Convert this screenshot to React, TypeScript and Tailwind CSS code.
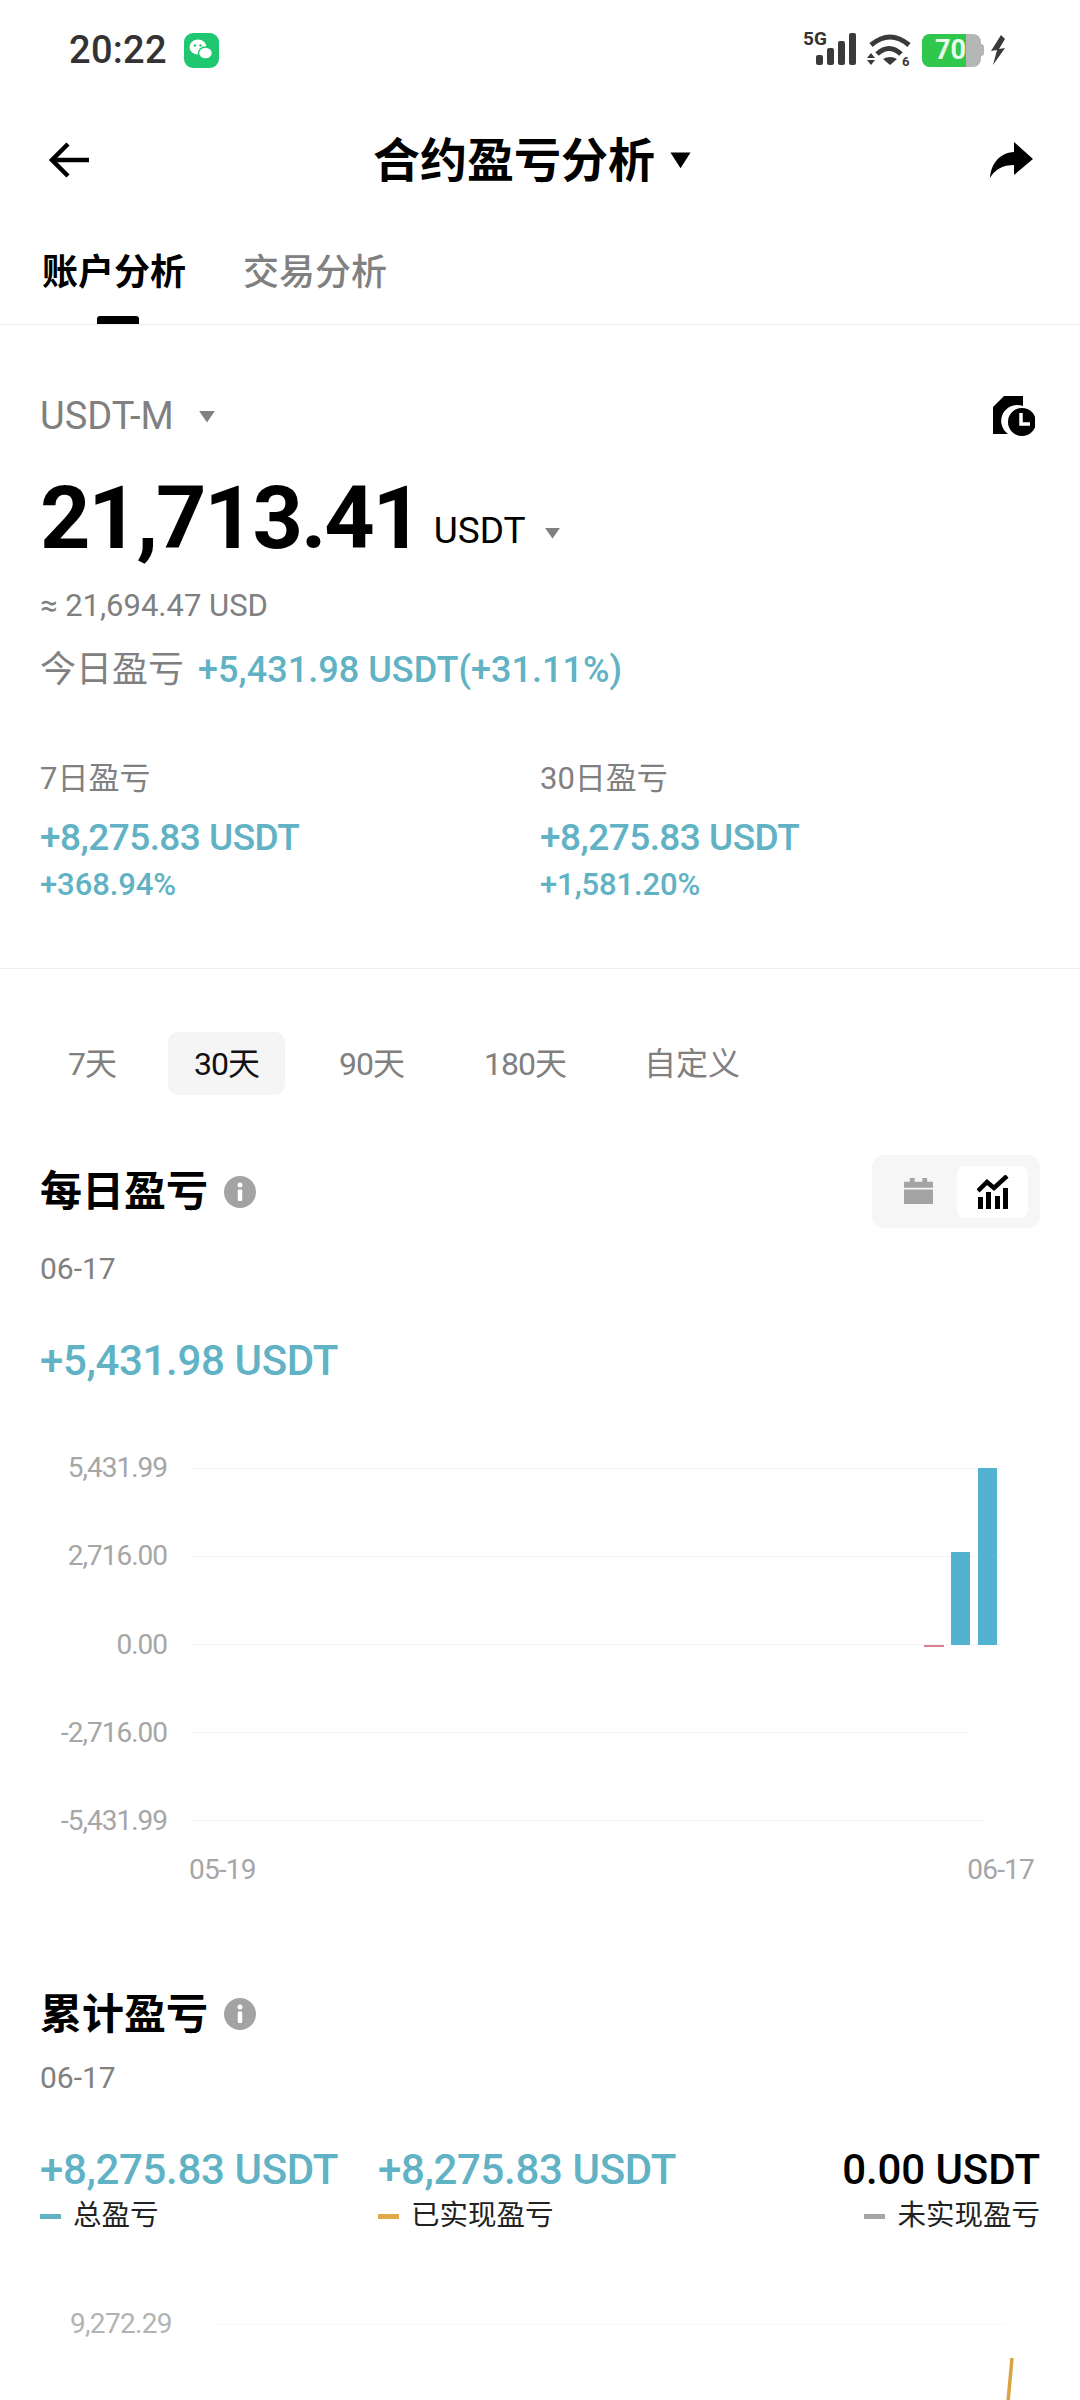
import React from "react"

const Caret = ({ className }: { className: string }) => (
  <svg viewBox="0 0 16 12" preserveAspectRatio="none" className={className}>
    <path d="M1 1h14L8 11.5z" fill="currentColor" />
  </svg>
)

const InfoIcon = () => (
  <svg viewBox="0 0 32 32" className="w-8 h-8 ml-4">
    <circle cx="16" cy="16" r="16" fill="#a3a3a3" />
    <rect x="13.8" y="13.5" width="4.4" height="11.5" rx="1" fill="#fff" />
    <circle cx="16" cy="9" r="2.5" fill="#fff" />
  </svg>
)

const StatusIcons = () => (
  <svg viewBox="0 -4 108 48" className="w-[108px] h-12">
    <text x="0" y="15" fontSize="19" fontWeight="700" fill="#333" fontFamily="Roboto">5G</text>
    <rect x="13" y="25" width="7" height="10" rx="2" fill="#3a3a3a" />
    <rect x="24" y="18" width="7" height="17" rx="2" fill="#3a3a3a" />
    <rect x="35" y="11" width="7" height="24" rx="2" fill="#3a3a3a" />
    <rect x="46" y="3" width="7" height="32" rx="2" fill="#3a3a3a" />
    <path d="M68 15 Q87 -1 106 15" fill="none" stroke="#3a3a3a" strokeWidth="5" />
    <path d="M74 24 Q86 13 98 24" fill="none" stroke="#3a3a3a" strokeWidth="5" />
    <path d="M80 29 Q87 25 94 29 L87 35z" fill="#3a3a3a" />
    <path d="M64 28h8l-4-5zM64 30h8l-4 5z" fill="#3a3a3a" />
    <text x="99" y="36" fontSize="13" fontWeight="700" fill="#3a3a3a" fontFamily="Roboto">6</text>
  </svg>
)

const Battery = () => (
  <div className="relative flex items-center ml-[11px]">
    <div className="relative w-[59px] h-[33px] rounded-[8px] overflow-hidden bg-[#b4b6b4] flex items-center">
      <div className="w-[44px] h-full bg-[#2fc84c]" />
      <span className="absolute left-[13px] text-[27px] leading-none font-bold text-[#eafbe9]">70</span>
    </div>
    <div className="w-[3px] h-[12px] rounded-r-sm bg-[#b4b6b4]" />
  </div>
)

const RANGES = [
  { label: "7天", cls: "ml-[28px] tracking-[-1px] flex items-center" },
  { label: "30天", cls: "ml-[52px] w-[117px] h-[63px] rounded-[10px] bg-[#f5f5f5] text-[#111] tracking-[-1px] flex items-center justify-center" },
  { label: "90天", cls: "ml-[54px] tracking-[-1px] flex items-center" },
  { label: "180天", cls: "ml-[80px] tracking-[-1px] flex items-center" },
  { label: "自定义", cls: "ml-[78px] flex items-center" },
]

function Legend({ color, label }: { color: string; label: string }) {
  return (
    <div className="flex items-center h-10 gap-[12px] text-[28.5px] text-[#222]">
      <span className={"w-[21px] h-[5px] " + color} />
      <span>{label}</span>
    </div>
  )
}

export default function App() {
  return (
    <div className="relative w-[1080px] h-[2400px] overflow-hidden bg-white font-['Roboto','Noto_Sans_CJK_SC',sans-serif]">
      {/* status bar */}
      <div className="h-[100px] flex items-center pl-[69px] pr-[75px]">
        <span className="text-[38px] font-medium text-[#333] tracking-[0.3px]">20:22</span>
        <div className="ml-[17px] w-[35px] h-[35px] rounded-[9px] bg-[#1fc771] flex items-center justify-center">
          <svg viewBox="0 0 28 28" className="w-[28px] h-[28px]">
            <ellipse cx="11" cy="11" rx="8.500" ry="7.500" fill="#fff" />
            <ellipse cx="18.500" cy="17" rx="7" ry="6" fill="#fff" stroke="#1fc771" strokeWidth="1.500" />
            <circle cx="8" cy="9.500" r="1.200" fill="#1fc771" />
            <circle cx="13.500" cy="9.500" r="1.200" fill="#1fc771" />
          </svg>
        </div>
        <div className="ml-auto flex items-center">
          <StatusIcons />
          <Battery />
          <svg viewBox="0 0 14 30" className="w-[14px] h-[30px] ml-[7px]">
            <path d="M10 0 0 16l6-1-4 15L14 13l-6 1 6-10z" fill="#3a3a3a" />
          </svg>
        </div>
      </div>

      {/* header */}
      <div className="h-[120px] flex items-center justify-between pl-[48px] pr-[47px]">
        <svg viewBox="0 0 42 36" className="w-[42px] h-9">
          <path d="M41 18H4M20 2 4 18l16 16" fill="none" stroke="#000" strokeWidth="4.500" />
        </svg>
        <div className="flex items-center mr-[14px] text-black">
          <span className="text-[47px] font-semibold leading-none">合约盈亏分析</span>
          <Caret className="w-[23px] h-[18px] ml-[14px]" />
        </div>
        <svg viewBox="0 0 44 36" className="w-[44px] h-9">
          <path d="M25 0 44 17 25 33V23C14 23 6 27 1 36 2 22 10 11 25 10z" fill="#000" />
        </svg>
      </div>

      {/* tabs */}
      <div className="relative h-[105px] pt-[2px] flex items-center gap-[57px] pl-[42px] border-b border-[#efefef] text-[36px]">
        <span className="font-bold text-black">账户分析</span>
        <span className="font-medium text-[#808080]">交易分析</span>
        <span className="absolute left-[97px] bottom-0 w-[42px] h-[8px] rounded-t-[3px] bg-black" />
      </div>

      {/* balance */}
      <div className="px-[40px]">
        <div className="mt-[66px] h-[50px] flex items-center justify-between">
          <div className="flex items-center text-[#808080]">
            <span className="text-[38px]">USDT-M</span>
            <Caret className="w-[18px] h-[13px] ml-[24px]" />
          </div>
          <svg viewBox="0 0 42 40" className="w-[42px] h-10 mr-[5px]">
            <path d="M11 0H30V10A16 16 0 0 0 15 38H0V11z" fill="#000" />
            <circle cx="29" cy="26" r="14" fill="#000" />
            <path d="M28 17V28H37" fill="none" stroke="#fff" strokeWidth="3.500" />
          </svg>
        </div>
        <div className="mt-[32px] h-[90px] flex items-end">
          <span className="text-[88px] font-bold leading-[90px] text-black tracking-[-2.2px]">21,713.41</span>
          <span className="ml-[13px] mb-[10px] text-[37px] leading-[44px] text-black">USDT</span>
          <Caret className="w-[17px] h-[12px] ml-[18px] mb-[24px] text-[#808080]" />
        </div>
        <div className="mt-[23px] h-10 flex items-center text-[31px] text-[#808080]">≈ 21,694.47 USD</div>
        <div className="mt-[19px] h-[50px] flex items-center text-[36px]">
          <span className="text-[#808080]">今日盈亏</span>
          <span className="ml-[14px] font-medium text-[#60b2c4] tracking-[0.05px]">+5,431.98 USDT(+31.11%)</span>
        </div>
        <div className="mt-[64px] grid grid-cols-[500px_1fr]">
          {["+368.94%", "+1,581.20%"].map((pct, i) => (
            <div key={pct}>
              <div className="h-10 flex items-center text-[31px] text-[#808080]">{i === 0 ? "7日盈亏" : "30日盈亏"}</div>
              <div className="mt-[17px] h-[44px] flex items-center text-[37px] font-medium text-[#60b2c4] tracking-[-0.55px]">+8,275.83 USDT</div>
              <div className="mt-[7px] h-9 flex items-center text-[31px] font-medium text-[#60b2c4] tracking-[-0.1px]">{pct}</div>
            </div>
          ))}
        </div>
      </div>
      <div className="mt-[65px] h-px bg-[#efefef]" />

      {/* range picker */}
      <div className="mt-[63px] pl-[40px] flex items-center h-[63px] text-[32px] text-[#808080]">
        {RANGES.map((r) => (
          <div key={r.label} className={r.cls}>
            {r.label}
          </div>
        ))}
      </div>

      {/* daily pnl */}
      <div className="px-[40px]">
        <div className="mt-[60px] h-[73px] flex items-center justify-between">
          <div className="flex items-center">
            <span className="text-[42px] font-bold text-black">每日盈亏</span>
            <InfoIcon />
          </div>
          <div className="w-[168px] h-[73px] rounded-[12px] bg-[#f6f6f6] flex items-center justify-end pr-[12px]">
            <svg viewBox="0 0 30 28" className="w-[29px] h-[27px] mr-[24px]">
              <path d="M0 4h6V0h5v4h8V0h5v4h6v6H0zM0 12h30v15H0z" fill="#a3a3a3" />
            </svg>
            <div className="w-[71px] h-[52px] rounded-[8px] bg-white flex items-center justify-center">
              <svg viewBox="0 0 32 34" className="w-8 h-[34px]">
                <path d="M1 16 10 7l7 6L30 1" fill="none" stroke="#000" strokeWidth="4.500" />
                <rect x="1" y="22" width="5" height="12" fill="#000" />
                <rect x="9" y="17" width="5" height="17" fill="#000" />
                <rect x="18" y="21" width="5" height="13" fill="#000" />
                <rect x="26" y="13" width="5" height="21" fill="#000" />
              </svg>
            </div>
          </div>
        </div>
        <div className="mt-[20px] h-10 flex items-center text-[30px] text-[#808080]">06-17</div>
        <div className="mt-[47px] h-[50px] flex items-center text-[42px] font-medium text-[#60b2c4] tracking-[-0.35px]">+5,431.98 USDT</div>

        {/* bar chart */}
        <div className="mt-[65px] h-[389px] flex">
          <div className="w-[127px] flex flex-col justify-between items-end text-[28px] leading-9 text-[#a6a6a6] tracking-[-1px]">
            <span>5,431.99</span>
            <span>2,716.00</span>
            <span>0.00</span>
            <span>-2,716.00</span>
            <span>-5,431.99</span>
          </div>
          <div className="relative ml-[23px] w-[810px] h-full py-[18px] flex flex-col justify-between">
            <div className="h-px bg-[#f4f4f4]" />
            <div className="h-px bg-[#f4f4f4]" />
            <div className="h-px bg-[#f4f4f4]" />
            <div className="h-px w-[780px] bg-[#f6f6f6]" />
            <div className="h-px w-[795px] bg-[#f6f6f6]" />
            <div className="absolute left-[734px] top-[195px] w-[20px] h-[2px] bg-[#d97f92]" />
            <div className="absolute left-[761px] top-[102px] w-[19px] h-[93px] bg-[#52b2cf]" />
            <div className="absolute left-[788px] top-[18px] w-[19px] h-[177px] bg-[#52b2cf]" />
          </div>
        </div>
        <div className="mt-[13px] h-9 pl-[149px] pr-[6px] flex items-center justify-between text-[28px] text-[#a6a6a6] tracking-[-0.8px]">
          <span>05-19</span>
          <span>06-17</span>
        </div>

        {/* cumulative pnl */}
        <div className="mt-[101px] h-[50px] flex items-center">
          <span className="text-[42px] font-bold text-black">累计盈亏</span>
          <InfoIcon />
        </div>
        <div className="mt-[18px] h-10 flex items-center text-[30px] text-[#808080]">06-17</div>
        <div className="mt-[47px] flex">
          <div className="w-[338px]">
            <div className="h-[50px] flex items-center text-[42px] font-medium text-[#60b2c4] tracking-[-0.35px]">+8,275.83 USDT</div>
            <div className="mt-[2px]"><Legend color="bg-[#60b2c4]" label="总盈亏" /></div>
          </div>
          <div>
            <div className="h-[50px] flex items-center text-[42px] font-medium text-[#60b2c4] tracking-[-0.35px]">+8,275.83 USDT</div>
            <div className="mt-[2px]"><Legend color="bg-[#e0aa4a]" label="已实现盈亏" /></div>
          </div>
          <div className="ml-auto flex flex-col items-end">
            <div className="h-[50px] flex items-center text-[42px] font-medium text-black tracking-[-0.1px]">0.00 USDT</div>
            <div className="mt-[2px]"><Legend color="bg-[#a6a6a6]" label="未实现盈亏" /></div>
          </div>
        </div>

        {/* cumulative chart, cut off by the screen edge */}
        <div className="mt-[70px] h-9 flex items-center">
          <span className="ml-[30px] w-[100px] text-[28px] text-[#b3b3b3] tracking-[-0.7px]">9,272.29</span>
          <div className="ml-[45px] w-[790px] h-px bg-[#f7f7f7]" />
        </div>
      </div>
      <svg viewBox="0 0 8 44" className="absolute left-[1006px] top-[2358px] w-2 h-[44px]">
        <path d="M6 0 2 44" fill="none" stroke="#d9a441" strokeWidth="3.500" />
      </svg>
    </div>
  )
}
